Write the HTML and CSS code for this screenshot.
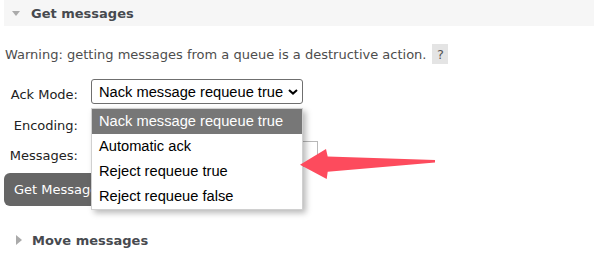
FILE: index.html
```html
<!DOCTYPE html>
<html lang="en">
<head>
<meta charset="utf-8">
<title>Get messages</title>
<link rel="stylesheet" href="styles.css">
</head>
<body>
<div class="page">
  <div class="section">
    <div class="section-head open">
      <span class="tri-down"></span>
      <h2>Get messages</h2>
    </div>
    <div class="section-body">
      <p class="warning">Warning: getting messages from a queue is a destructive action.<span class="help">?</span></p>
      <form class="form">
        <div class="row">
          <label class="lbl lbl-1">Ack Mode:</label>
          <div class="select-wrap">
            <div class="select">
              <span>Nack message requeue true</span>
              <svg class="chev" width="10" height="6" viewBox="0 0 10 6"><path d="M1 1 L5 4.6 L9 1" fill="none" stroke="#000" stroke-width="2"/></svg>
            </div>
            <ul class="dropdown">
              <li class="opt selected">Nack message requeue true</li>
              <li class="opt">Automatic ack</li>
              <li class="opt">Reject requeue true</li>
              <li class="opt">Reject requeue false</li>
            </ul>
          </div>
        </div>
        <div class="row">
          <label class="lbl lbl-2">Encoding:</label>
          <div class="select small"></div>
        </div>
        <div class="row">
          <label class="lbl lbl-3">Messages:</label>
          <input class="text" type="text" value="">
        </div>
        <button class="btn" type="button">Get Messages</button>
      </form>
    </div>
  </div>
  <div class="section">
    <div class="section-head closed">
      <span class="tri-right"></span>
      <h2>Move messages</h2>
    </div>
  </div>
</div>
<svg class="annot-arrow" width="144" height="40" viewBox="296 144 144 40">
  <path d="M300 164.7 L326 149 L327.7 156.5 L435 160 L435 162.4 L327.7 171.8 L326.7 179 Z" fill="#fd4b5d"/>
</svg>
</body>
</html>
```
FILE: styles.css
```css
html, body {
  margin: 0;
  padding: 0;
}
body {
  width: 594px;
  height: 272px;
  overflow: hidden;
  position: relative;
  background: #fff;
  font-family: "DejaVu Sans", Verdana, sans-serif;
  font-size: 13px;
  color: #484848;
}
.page {
  padding-left: 4px;
}
.section-head {
  display: flex;
  align-items: center;
  height: 26px;
}
.section-head.open {
  background: #f6f6f6;
}
.section-head h2 {
  margin: 0;
  font-size: 13px;
  font-weight: bold;
  color: #474a4f;
  line-height: 15px;
}
.tri-down {
  width: 0;
  height: 0;
  border-left: 4.5px solid transparent;
  border-right: 4.5px solid transparent;
  border-top: 5px solid #aaa;
  margin-left: 7.5px;
  margin-right: 11.5px;
}
.tri-right {
  width: 0;
  height: 0;
  border-top: 5.5px solid transparent;
  border-bottom: 5.5px solid transparent;
  border-left: 6.5px solid #aaa;
  margin-left: 12px;
  margin-right: 10px;
}
.section-head.closed {
  margin-top: 21px;
}
.warning {
  display: flex;
  align-items: center;
  height: 20px;
  margin: 18px 0 0 1px;
  color: #4d4d4d;
  line-height: 15px;
}
.help {
  display: inline-flex;
  align-items: center;
  justify-content: center;
  width: 16px;
  height: 20px;
  margin-left: 6px;
  background: #e4e4e4;
  color: #555;
}
.form {
  margin: 15px 0 0 0;
}
.row {
  display: flex;
  align-items: flex-start;
  margin-bottom: 6px;
}
.lbl {
  width: 74px;
  margin-right: 13px;
  text-align: right;
  color: #222;
  line-height: 15px;
}
.lbl-1 { padding-top: 8px; }
.lbl-2 { padding-top: 7.5px; }
.lbl-3 { padding-top: 6.5px; }
.select-wrap {
  position: relative;
}
.select {
  box-sizing: border-box;
  width: 212px;
  height: 25px;
  display: flex;
  align-items: center;
  justify-content: space-between;
  padding: 0 4px 0 7px;
  border: 1px solid #6f6f6f;
  border-radius: 3px;
  background: #fff;
  font-family: "Liberation Sans", Arial, sans-serif;
  font-size: 14.67px;
  color: #000;
}
.select.small {
  width: 190px;
}
.chev {
  display: block;
  margin-top: 1px;
}
.dropdown {
  position: absolute;
  left: 0;
  top: 29px;
  z-index: 5;
  box-sizing: border-box;
  width: 212px;
  margin: 0;
  padding: 0;
  list-style: none;
  background: #fff;
  border: 1px solid #d0d0d0;
  box-shadow: 3px 3px 6px rgba(0, 0, 0, 0.28);
}
.opt {
  height: 25px;
  line-height: 25px;
  padding-left: 7px;
  font-family: "Liberation Sans", Arial, sans-serif;
  font-size: 14.67px;
  color: #000;
  white-space: nowrap;
}
.opt.selected {
  background: #777;
  color: #fff;
}
.text {
  box-sizing: border-box;
  width: 227px;
  height: 26px;
  margin: 0;
  border: 1px solid #b8b8b8;
  background: #fff;
  font-family: "DejaVu Sans", Verdana, sans-serif;
  font-size: 13px;
  padding: 0 6px;
}
.btn {
  display: block;
  height: 33px;
  margin-top: 3px;
  padding: 0 10px;
  border: none;
  border-radius: 6px;
  background: #666;
  color: #fff;
  font-family: "DejaVu Sans", Verdana, sans-serif;
  font-size: 13px;
}
.annot-arrow {
  position: absolute;
  left: 296px;
  top: 144px;
  z-index: 10;
}
```
